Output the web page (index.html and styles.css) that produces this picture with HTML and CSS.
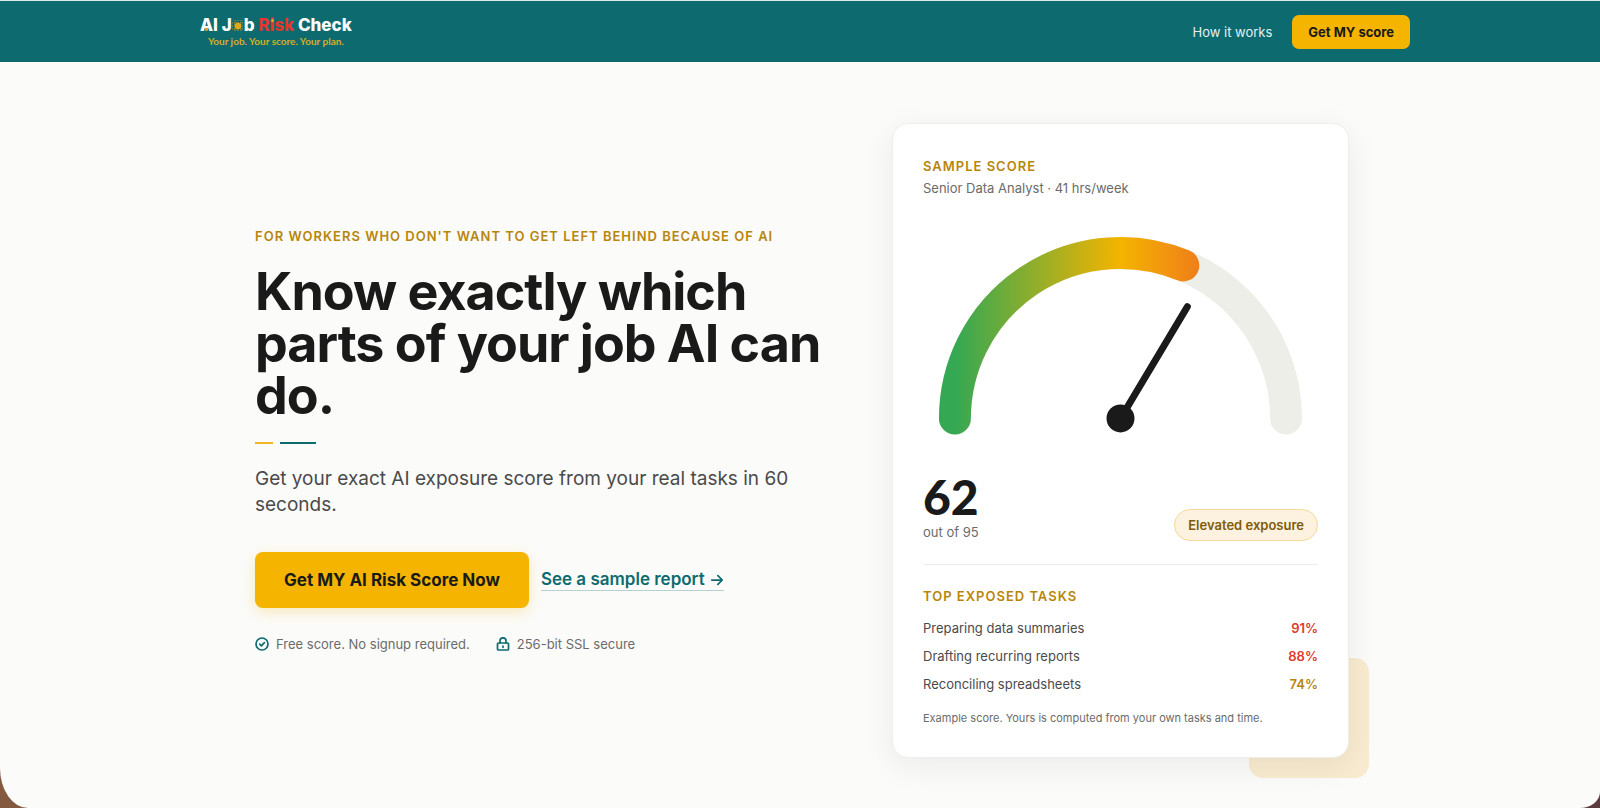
FILE: index.html
```html
<!DOCTYPE html>
<html lang="en">
<head>
<meta charset="utf-8">
<meta name="viewport" content="width=device-width, initial-scale=1">
<title>AI Job Risk Check</title>
<link rel="stylesheet" href="styles.css">
</head>
<body>
<div class="page">
  <header class="site-header">
    <div class="nav">
      <a class="logo" href="#" aria-label="AI Job Risk Check">
        <span class="logo-name"><span class="logo-a">A</span>I J<svg class="logo-chip" viewBox="0 0 12 12" aria-hidden="true"><path d="M3 0v12M6 0v12M9 0v12M0 3h12M0 6h12M0 9h12" stroke="#b99a2c" stroke-width="1" stroke-dasharray="1 1"/><circle cx="6" cy="6" r="3.2" fill="#e0aa14"/></svg>b <span class="logo-risk">R<span class="logo-i">i</span>sk</span> Check</span>
        <span class="logo-tagline">Your job. Your score. Your plan.</span>
      </a>
      <nav class="nav-links">
        <a class="nav-link" href="#how">How it works</a>
        <button class="btn btn-small" type="button">Get MY score</button>
      </nav>
    </div>
  </header>

  <main class="hero">
    <section class="intro">
      <p class="eyebrow">For workers who don't want to get left behind because of AI</p>
      <h1 class="title">Know exactly which parts of your job AI can do.</h1>
      <div class="rule"><span class="rule-gold"></span><span class="rule-teal"></span></div>
      <p class="lead">Get your exact AI exposure score from your real tasks in 60 seconds.</p>
      <div class="actions">
        <button class="btn btn-large" type="button">Get MY AI Risk Score Now</button>
        <a class="sample-link" href="#sample">See a sample report <svg class="arrow" viewBox="0 0 16 16" aria-hidden="true"><path d="M2 8h12M9 3l5 5-5 5"/></svg></a>
      </div>
      <ul class="assurances">
        <li class="assurance"><svg class="icon" viewBox="0 0 14 14" aria-hidden="true"><circle cx="7" cy="7" r="6"/><path d="M4.700 7.200l1.700 1.600 3-3.200"/></svg>Free score. No signup required.</li>
        <li class="assurance"><svg class="icon" viewBox="0 0 14 14" aria-hidden="true"><rect x="1.500" y="6" width="11" height="7" rx="1"/><path d="M4 6V3.800a3 3 0 0 1 6 0V6M7 9v1.300"/></svg>256-bit SSL secure</li>
      </ul>
    </section>

    <aside class="sample">
      <div class="card">
        <h2 class="eyebrow">Sample score</h2>
        <p class="role">Senior Data Analyst · 41 hrs/week</p>
        <svg class="gauge" viewBox="0 0 396 228" role="img" aria-label="Score 62 out of 95">
          <defs>
            <linearGradient id="scale" gradientUnits="userSpaceOnUse" x1="32" y1="0" x2="364" y2="0">
              <stop offset="0" stop-color="#34a853"/>
              <stop offset="0.5" stop-color="#f4b400"/>
              <stop offset="1" stop-color="#ea4335"/>
            </linearGradient>
          </defs>
          <g fill="none" stroke-linecap="round" stroke-width="32">
            <path d="M32 200a166 166 0 0 1 332 0" stroke="#eeeee8"/>
            <path d="M32 200A166 166 0 0 1 261 46.500" stroke="url(#scale)"/>
          </g>
          <path d="M198 200L265 88" stroke="#1a1a1a" stroke-width="7" stroke-linecap="round"/>
          <circle cx="198" cy="200" r="14" fill="#1a1a1a"/>
        </svg>
        <div class="result">
          <div>
            <div class="score">62</div>
            <div class="score-max">out of 95</div>
          </div>
          <span class="badge">Elevated exposure</span>
        </div>
        <h2 class="eyebrow">Top exposed tasks</h2>
        <dl class="tasks">
          <div class="task"><dt>Preparing data summaries</dt><dd class="high">91%</dd></div>
          <div class="task"><dt>Drafting recurring reports</dt><dd class="high">88%</dd></div>
          <div class="task"><dt>Reconciling spreadsheets</dt><dd class="medium">74%</dd></div>
        </dl>
        <p class="note">Example score. Yours is computed from your own tasks and time.</p>
      </div>
    </aside>
  </main>
</div>
</body>
</html>
```

FILE: styles.css
```css
* { box-sizing: border-box; }
html { background: linear-gradient(90deg, #85593f, #5b3b3d); }
body { margin: 0; font-family: Inter, "Liberation Sans", sans-serif; color: #1a1a1a; }
h1, h2, p, ul, dl, dd { margin: 0; padding: 0; }
a { text-decoration: none; }

.page {
  display: flex;
  flex-direction: column;
  min-height: 100vh;
  background: #fbfbf9;
  border-radius: 0 0 20px 28px / 0 0 16px 40px;
  overflow: hidden;
}

.site-header { background: #0d6b70; border-top: 1px solid #dcebea; padding: 0 24px 0 34px; }
.nav {
  display: flex;
  align-items: center;
  justify-content: space-between;
  max-width: 1210px;
  height: 61px;
  margin: 0 auto;
}
.logo { display: flex; flex-direction: column; align-items: center; }
.logo-name { font-size: 17px; line-height: 18px; font-weight: 800; color: #fff; white-space: nowrap; }
.logo-chip { width: 12px; height: 12px; vertical-align: -1px; }
.logo-risk { color: #e5352d; }
.logo-a, .logo-i { position: relative; }
.logo-a::after, .logo-i::after {
  content: "";
  position: absolute;
  width: 3px;
  height: 3px;
  border-radius: 50%;
  background: #f0a91c;
}
.logo-a::after { left: 5px; bottom: 4px; }
.logo-i::after { left: 1px; top: 4px; }
.logo-tagline { font-family: Lato, sans-serif; font-size: 10px; line-height: 14px; font-weight: 700; color: #d9ab27; }
.nav-links { display: flex; align-items: center; gap: 20px; }
.nav-link { font-size: 13px; color: #e3f0f0; }

.btn { border: 0; background: #f4b400; color: #1a1a1a; font-family: inherit; font-weight: 700; cursor: pointer; }
.btn-small { height: 34px; padding: 0 16px; border-radius: 7px; font-size: 13px; }
.btn-large { height: 56px; padding: 0 29px; border-radius: 8px; font-size: 17px; box-shadow: 0 4px 14px rgba(244, 180, 0, .25); }

.hero {
  flex: 1;
  display: grid;
  grid-template-columns: minmax(0, 570px) 457px;
  justify-content: space-between;
  align-items: center;
  width: 100%;
  max-width: 1142px;
  margin: 0 auto;
  padding: 61px 22px 50px 26px;
}
.eyebrow { font-size: 13px; line-height: 16px; font-weight: 600; letter-spacing: 1px; text-transform: uppercase; color: #b8860b; }
.title { margin-top: 22px; font-size: 52px; line-height: 52px; font-weight: 700; letter-spacing: -1px; }
.rule { display: flex; gap: 7px; margin-top: 20px; }
.rule span { height: 2px; }
.rule-gold { width: 18px; background: #f0b824; }
.rule-teal { width: 36px; background: #0d6b70; }
.lead { margin-top: 22px; font-size: 19px; line-height: 26px; color: #4a4a4a; }
.actions { display: flex; align-items: center; gap: 12px; margin-top: 34px; }
.sample-link { display: flex; align-items: center; gap: 5px; font-size: 17px; line-height: 21px; font-weight: 600; color: #0d6b70; border-bottom: 1px solid #b5d0cf; }
.arrow { width: 14px; height: 16px; fill: none; stroke: #0d6b70; stroke-width: 2; stroke-linecap: round; stroke-linejoin: round; }
.assurances { display: flex; gap: 26px; margin-top: 27px; list-style: none; }
.assurance { display: flex; align-items: center; gap: 7px; font-size: 13px; line-height: 18px; color: #6b6b6b; }
.icon { width: 14px; height: 14px; fill: none; stroke: #0d6b70; stroke-width: 1.7; stroke-linecap: round; stroke-linejoin: round; }

.sample { position: relative; z-index: 0; }
.sample::before {
  content: "";
  position: absolute;
  right: -20px;
  bottom: -20px;
  z-index: -1;
  width: 120px;
  height: 120px;
  border-radius: 14px;
  background: #f9ebcf;
}
.card { padding: 34px 30px 31px; background: #fff; border: 1px solid #eeeeea; border-radius: 16px; box-shadow: 0 8px 32px rgba(26, 26, 26, .07); }
.role { margin-top: 5px; font-size: 13px; line-height: 18px; color: #6b6b6b; }
.gauge { display: block; width: 100%; margin: 22px 0 26px; }
.result { display: flex; align-items: flex-end; justify-content: space-between; padding-bottom: 23px; margin-bottom: 23px; border-bottom: 1px solid #ececea; }
.score { font-family: Lato, sans-serif; font-size: 48px; line-height: 48px; font-weight: 900; }
.score-max { margin-top: 2px; font-size: 13px; line-height: 18px; color: #6b6b6b; }
.badge { padding: 5px 13px; border: 1px solid #f8d998; border-radius: 16px; background: #fdf2df; font-size: 13px; line-height: 20px; font-weight: 600; color: #805b0a; }
.tasks { display: grid; gap: 10px; margin-top: 15px; font-size: 13px; line-height: 18px; }
.task { display: flex; justify-content: space-between; color: #4a4a4a; }
.task dd { font-weight: 600; }
.task .high { color: #e0392d; }
.task .medium { color: #b8860b; }
.note { margin-top: 17px; font-size: 11px; line-height: 16px; color: #6b6b6b; }
```
